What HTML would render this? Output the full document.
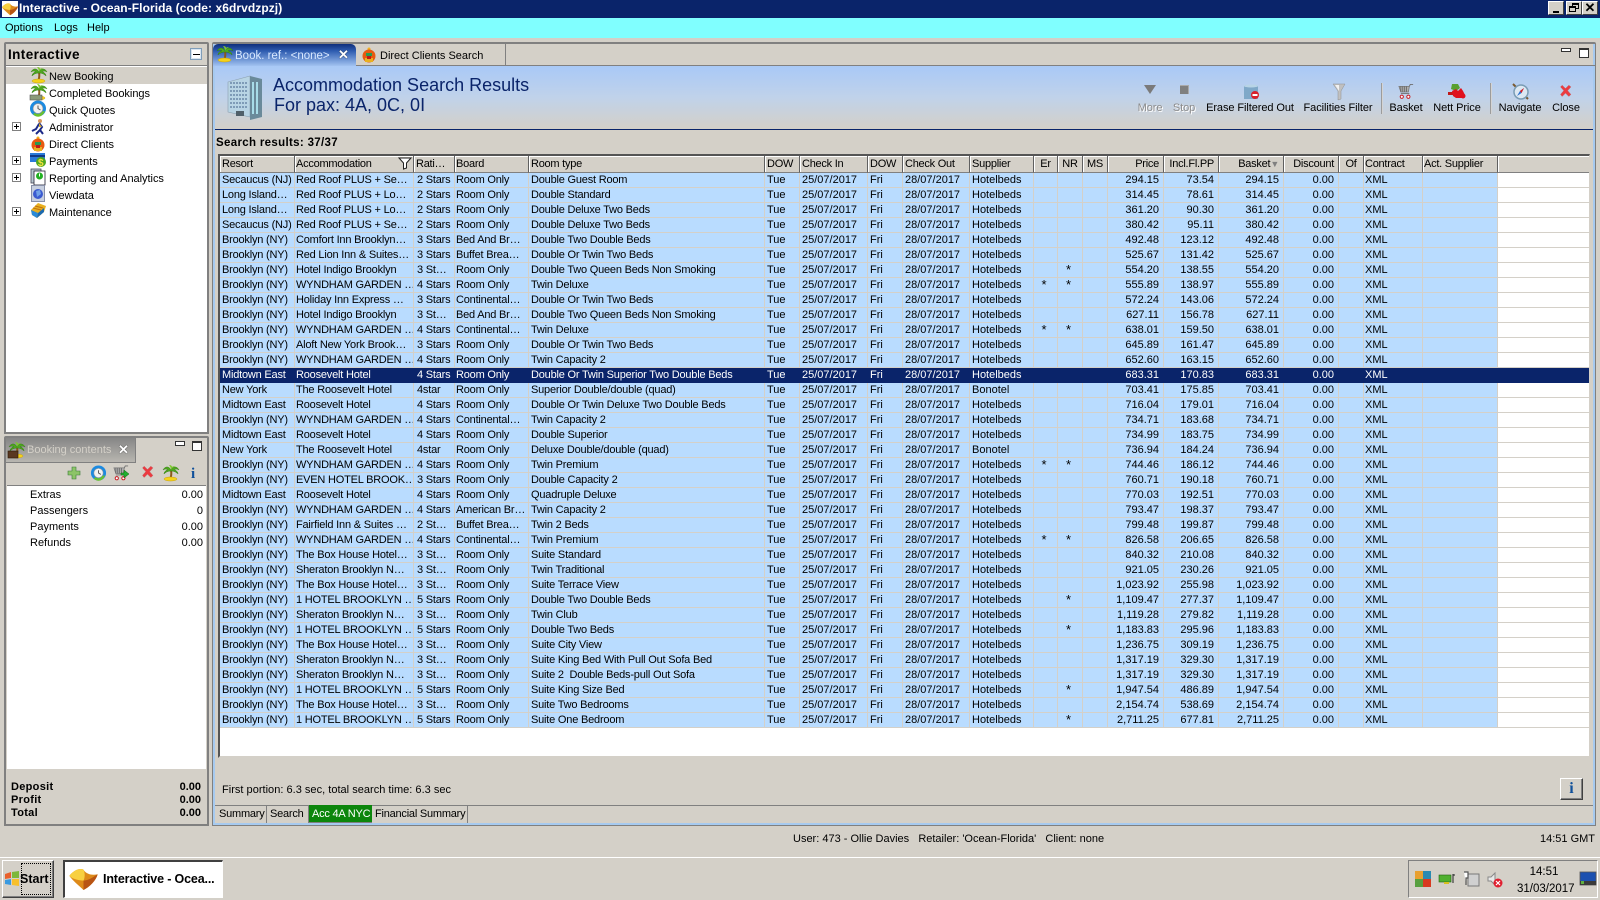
<!DOCTYPE html>
<html><head><meta charset="utf-8"><title>Interactive</title>
<style>
*{box-sizing:border-box}
html,body{margin:0;padding:0;width:1600px;height:900px;overflow:hidden;background:#d4d0c8;font:11px/14px "Liberation Sans",sans-serif;color:#000}
.a{position:absolute;white-space:nowrap}
svg{position:absolute;overflow:visible}
#title{left:0;top:0;width:1600px;height:18px;background:#0a246a;color:#fff;font:bold 12px/17px "Liberation Sans",sans-serif;padding-left:19px;letter-spacing:.07px}
#menu{left:0;top:18px;width:1600px;height:20px;background:#80ffff}
.wb{top:1px;width:16px;height:14px;background:#d4d0c8;border:1px solid;border-color:#fff #404040 #404040 #fff}
.panel{background:#d4d0c8;border:2px solid #808080;border-radius:2px 2px 0 0}
#grid{left:218px;top:154px;width:1372px;height:604px;background:#fff;border-top:2px solid #555;border-left:2px solid #555;border-right:1px solid #d4d0c8;border-bottom:2px solid #d4d0c8;overflow:hidden}
table{border-collapse:separate;border-spacing:0;table-layout:fixed;width:1370px;position:absolute;left:0;top:0}
td,th{padding:0 2px;height:15px;line-height:14px;font-size:11px;font-weight:normal;white-space:nowrap;overflow:hidden;text-align:left;border-right:1px solid #d4d0c8;border-bottom:1px solid #d4d0c8;background:#b9dcff}
td:nth-child(-n+5){letter-spacing:-.2px}
th{height:17px;background:#d4d0c8;border-right:1px solid #606060;border-bottom:1px solid #808080;box-shadow:inset 1px 1px 0 #fff;padding-left:2px;letter-spacing:-.25px}
td:nth-child(21){background:#fff;border-right:0}
th:nth-child(21){border-right:0}
td:nth-child(n+14):nth-child(-n+17),th:nth-child(n+14):nth-child(-n+17){text-align:right;padding-right:4px}
td:nth-child(11),td:nth-child(12),th:nth-child(11),th:nth-child(12),th:nth-child(13),th:nth-child(18){text-align:center}
td:nth-child(11),td:nth-child(12){font-size:13px;padding:0 3px 0 0;line-height:14px}
td:nth-child(2),td:nth-child(4),th:nth-child(2),th:nth-child(4),td:nth-child(19),th:nth-child(19),th:nth-child(20){padding-left:1px}
td:nth-child(3){padding-left:3px}
tr.s td{background:#0a246a;color:#fff;border-color:#0a246a}
.tree{left:49px;font-size:11px;letter-spacing:-.03px}
.plus{left:12px;width:9px;height:9px;border:1px solid #808080;background:#fff}
.plus:before{content:"";position:absolute;left:1px;top:3px;width:5px;height:1px;background:#000}
.plus:after{content:"";position:absolute;left:3px;top:1px;width:1px;height:5px;background:#000}
.tb{top:101px;text-align:center;transform:translateX(-50%);font-size:11px;letter-spacing:-.08px}
.dis{color:#8c8c8c;text-shadow:1px 1px 0 #fff}
.b{font-weight:bold}
.btab{top:805px;height:18px;line-height:19px;padding:0 3px;border-right:1px solid #808080;font-size:11px;letter-spacing:-.22px}
</style></head><body>
<svg width="0" height="0" style="position:absolute"><defs>
<symbol id="palm" viewBox="0 0 18 18"><path d="M9 6C9.500 9 9.300 12 8.500 14" stroke="#8a5a1c" stroke-width="2" fill="none"/><path d="M9 6C7 2 3 2 1 6 3 4.500 5 5 6 6 4 6 2 8 2 10 4 8 6 7 9 7 12 7 14 8 16 10 16 8 14 6 12 6 13 5 15 4.500 17 6 15 2 11 2 9 6Z" fill="#4ea81e" stroke="#2f7a10" stroke-width=".5"/><path d="M9 6C9 4 8 2 7 1 9 1 10 2 10 3 11 2 12 2 13 2 11 3 10 4 9 6Z" fill="#7ec82e"/><ellipse cx="8.500" cy="15" rx="6.500" ry="2" fill="#f4d21c" stroke="#c8a010" stroke-width=".5"/></symbol>
<symbol id="clock" viewBox="0 0 18 18"><circle cx="9" cy="8.500" r="8" fill="#1c8ae0"/><circle cx="9" cy="8.500" r="4.900" fill="#f2f2f2" stroke="#9a9a9a" stroke-width=".6"/><path d="M9 5.500V8.500L11.500 10" stroke="#555" stroke-width="1" fill="none"/><path d="M4 14C7 18 13 18 16 11L13 11.500C12 14 8 15 6 13Z" fill="#6cc22a"/></symbol>
<symbol id="cart" viewBox="0 0 18 18"><path d="M1 3H12L11 9H3Z" fill="#b0b0b0" stroke="#777" stroke-width=".8"/><path d="M3 3V9M5 3V9M7 3V9M9 3V9M12 3L13 1H16M3 10.500H12" stroke="#6f6f6f" stroke-width="1" fill="none"/><circle cx="4" cy="14" r="1.700" fill="#fff" stroke="#c8141c" stroke-width="1"/><circle cx="11" cy="14" r="1.700" fill="#fff" stroke="#c8141c" stroke-width="1"/></symbol>
<symbol id="x" viewBox="0 0 18 18"><path d="M3 3.500 5 1.500 9 5.500 13 1.500 15.500 3.500 11.500 8 15.500 12.500 13 15 9 11 5 15 3 12.500 7 8Z" fill="#ec3a40" stroke="#c0686c" stroke-width=".6"/></symbol>
<symbol id="logo" viewBox="0 0 18 14"><path d="M0 5C3 1 7 0 9 1 10 3 13 5 18 4 17 8 13 12 9 14 6 11 2 8 0 5Z" fill="#dd8a1a"/><path d="M0 5C3 1 7 0 9 1 10 3 10 6 9 8 6 8 2 7 0 5Z" fill="#f8d040"/><path d="M9 8C12 8 15 6 18 4 17 8 13 12 9 14Z" fill="#b85414"/></symbol>
</defs></svg>

<div class="a" id="title">Interactive - Ocean-Florida (code: x6drvdzpzj)</div>
<div class="a" style="left:2px;top:1px;width:16px;height:16px;background:#fff"></div>
<svg style="left:2px;top:2px" width="16" height="14"><use href="#logo" width="16" height="14"/></svg>
<div class="a wb" style="left:1548px"><div class="a" style="left:4px;top:9px;width:6px;height:2px;background:#000"></div></div>
<div class="a wb" style="left:1566px"><div class="a" style="left:5px;top:1px;width:7px;height:6px;border:1px solid #000;border-top-width:2px"></div><div class="a" style="left:2px;top:4px;width:7px;height:6px;border:1px solid #000;border-top-width:2px;background:#d4d0c8"></div></div>
<div class="a wb" style="left:1582px;font:bold 13px/12px 'Liberation Sans';text-align:center">✕</div>

<div class="a" id="menu"></div>
<div class="a" style="left:5px;top:21px;font-size:11px;line-height:15px">Options</div>
<div class="a" style="left:54px;top:21px;font-size:11px;line-height:15px">Logs</div>
<div class="a" style="left:87px;top:21px;font-size:11px;line-height:15px">Help</div>

<!-- Left tree panel -->
<div class="a panel" style="left:4px;top:42px;width:205px;height:392px;background:#fff"></div>
<div class="a" style="left:6px;top:44px;width:201px;height:22px;background:#d4d0c8;border-bottom:1px solid #808080"></div>
<div class="a b" style="left:8px;top:47px;font-size:13.500px;line-height:15px;letter-spacing:.4px">Interactive</div>
<div class="a" style="left:190px;top:48px;width:12px;height:12px;background:#fff;border:1px solid #7f9db9;box-shadow:inset 0 0 0 1px #d8e4f0"><div class="a" style="left:2px;top:5px;width:7px;height:1px;background:#000"></div></div>
<div class="a" style="left:6px;top:67px;width:201px;height:17px;background:#d4d0c8"></div>
<svg style="left:30px;top:66px" width="18" height="18"><use href="#palm" width="18" height="18"/></svg>
<div class="a tree" style="top:70px">New Booking</div>
<svg style="left:30px;top:83px" width="18" height="18"><use href="#palm" width="18" height="18"/><rect x="0" y="12" width="12" height="5" fill="#8a9a78" stroke="#555" stroke-width=".6"/></svg>
<div class="a tree" style="top:87px">Completed Bookings</div>
<svg style="left:29px;top:100px" width="18" height="18"><use href="#clock" width="18" height="18"/></svg>
<div class="a tree" style="top:104px">Quick Quotes</div>
<div class="a plus" style="top:122px"></div>
<svg style="left:31px;top:118px" width="16" height="17"><circle cx="9" cy="3" r="2" fill="#d89a60"/><path d="M8 5 11 9 9 12 12 16M8 6 5 11 1 13M9 12 5 16" stroke="#1c2a88" stroke-width="2" fill="none"/><path d="M8 5 11 9 8 9Z" fill="#d8b030"/></svg>
<div class="a tree" style="top:121px">Administrator</div>
<svg style="left:30px;top:135px" width="16" height="17"><circle cx="8" cy="3" r="1.500" fill="#f0b020"/><circle cx="8" cy="10" r="6.500" fill="#e85a10"/><rect x="5" y="7" width="6" height="3" fill="#2a9a50"/><path d="M4 12H12V16H4Z" fill="#e8b020"/><path d="M6 10H10V13H6Z" fill="#c01818"/></svg>
<div class="a tree" style="top:138px">Direct Clients</div>
<div class="a plus" style="top:156px"></div>
<svg style="left:30px;top:152px" width="17" height="17"><rect x="0" y="1" width="15" height="9" fill="#2a7ad8"/><rect x="0" y="3" width="15" height="2" fill="#103a88"/><circle cx="11" cy="10" r="5" fill="#4ea81e"/><text x="8" y="14" font-family="Liberation Sans" font-size="10" font-weight="bold" fill="#f4e040">$</text></svg>
<div class="a tree" style="top:155px">Payments</div>
<div class="a plus" style="top:173px"></div>
<svg style="left:31px;top:168px" width="15" height="18"><rect x="0" y="1" width="10" height="14" fill="#b8c8d0" stroke="#445" stroke-width=".8"/><rect x="3" y="3" width="11" height="14" fill="#fff" stroke="#223" stroke-width=".8"/><circle cx="8.500" cy="8" r="3.500" fill="#22b022"/><rect x="8" y="5.500" width="1" height="3" fill="#fff"/></svg>
<div class="a tree" style="top:172px">Reporting and Analytics</div>
<svg style="left:31px;top:185px" width="15" height="18"><rect x=".5" y=".5" width="13" height="16" fill="#c8d0e0" stroke="#8890a8"/><circle cx="7" cy="9" r="5" fill="#3a5ad0"/><path d="M5 6 9 5 10 9 6 12Z" fill="#70a0e8"/></svg>
<div class="a tree" style="top:189px">Viewdata</div>
<div class="a plus" style="top:207px"></div>
<svg style="left:30px;top:202px" width="17" height="17"><path d="M1 8 8 1 16 4 14 10 7 16 2 13Z" fill="#e8b020"/><path d="M1 8 8 11 7 16 2 13Z" fill="#2a8ad8"/><path d="M8 11 14 6 14 10 7 16Z" fill="#1c6ab0"/><path d="M5 4 13 6 M3 6 11 8" stroke="#c07010"/></svg>
<div class="a tree" style="top:206px">Maintenance</div>

<!-- Booking contents panel -->
<div class="a panel" style="left:4px;top:436px;width:205px;height:390px"></div>
<div class="a" style="left:6px;top:438px;width:130px;height:24px;background:linear-gradient(#868686,#b8b6b0);border-right:1px solid #808080"></div>
<svg style="left:8px;top:441px" width="18" height="18"><use href="#palm" width="18" height="18"/><rect x="0" y="10" width="10" height="7" fill="#5a3820" stroke="#2c1a08" stroke-width=".6"/></svg>
<div class="a" style="left:27px;top:443px;color:#d4d0c8;font-size:11px;line-height:15px">Booking contents</div>
<div class="a" style="left:118px;top:443px;color:#fff;font:bold 13px/14px 'Liberation Sans';text-shadow:0 0 1px #000">✕</div>
<div class="a" style="left:6px;top:462px;width:130px;height:1px;background:#808080"></div>
<div class="a" style="left:175px;top:441px;width:10px;height:5px;border:1px solid #333;background:#fff"></div>
<div class="a" style="left:192px;top:441px;width:10px;height:10px;border:1px solid #333;border-top-width:2px;background:#fff"></div>
<div class="a" style="left:7px;top:463px;width:199px;height:23px;background:#d4d0c8;border-bottom:1px solid #808080"></div>
<svg style="left:68px;top:467px" width="13" height="13"><path d="M4 0H8V4H12V8H8V12H4V8H0V4H4Z" fill="#8cc468" stroke="#3a7a3a" stroke-width=".6"/></svg>
<svg style="left:90px;top:465px" width="17" height="17"><use href="#clock" width="17" height="17"/></svg>
<svg style="left:113px;top:465px" width="17" height="17"><use href="#cart" width="17" height="17"/><path d="M8 8H11V5L16 9 11 13V10H8Z" fill="#20b030" stroke="#106010" stroke-width=".5"/></svg>
<svg style="left:140px;top:465px" width="15" height="15"><use href="#x" width="15" height="15"/></svg>
<svg style="left:162px;top:464px" width="18" height="18"><use href="#palm" width="18" height="18"/></svg>
<div class="a" style="left:191px;top:466px;color:#10509a;font:bold 15px/17px 'Liberation Serif',serif">i</div>
<div class="a" style="left:7px;top:486px;width:199px;height:283px;background:#fff"></div>
<div class="a" style="left:30px;top:488px">Extras</div><div class="a" style="right:1397px;top:488px">0.00</div>
<div class="a" style="left:30px;top:504px">Passengers</div><div class="a" style="right:1397px;top:504px">0</div>
<div class="a" style="left:30px;top:520px">Payments</div><div class="a" style="right:1397px;top:520px">0.00</div>
<div class="a" style="left:30px;top:536px">Refunds</div><div class="a" style="right:1397px;top:536px">0.00</div>
<div class="a b" style="left:11px;top:781px;line-height:13px;letter-spacing:.3px">Deposit<br>Profit<br>Total</div>
<div class="a b" style="right:1399px;top:781px;line-height:13px;text-align:right">0.00<br>0.00<br>0.00</div>

<!-- Right main panel -->
<div class="a" style="left:212px;top:42px;width:1384px;height:784px;border:1px solid #808080;border-top-width:2px;border-radius:2px 2px 0 0"></div>
<div class="a" style="left:213px;top:44px;width:1382px;height:781px;border:2px solid #a6caf0;border-top:0"></div>
<div class="a" style="left:213px;top:65px;width:1382px;height:1px;background:#808080"></div>
<div class="a" style="left:213px;top:44px;width:143px;height:23px;background:linear-gradient(#0f2f7c,#2e5cb0 30%,#a9c9f5);border-radius:5px 5px 0 0"></div>
<svg style="left:216px;top:45px" width="18" height="18"><use href="#palm" width="18" height="18"/></svg>
<div class="a" style="left:235px;top:49px;color:#d8e8ff;font-size:11.500px">Book. ref.: &lt;none&gt;</div>
<div class="a" style="left:338px;top:48px;color:#fff;font:bold 13px/14px 'Liberation Sans';text-shadow:0 0 1px #000">✕</div>
<div class="a" style="left:505px;top:44px;width:1px;height:21px;background:#808080"></div>
<svg style="left:361px;top:46px" width="16" height="17"><circle cx="8" cy="3" r="1.500" fill="#f0b020"/><circle cx="8" cy="10" r="6.500" fill="#e85a10"/><rect x="5" y="7" width="6" height="3" fill="#2a9a50"/><path d="M4 12H12V16H4Z" fill="#e8b020"/><path d="M6 10H10V13H6Z" fill="#c01818"/></svg>
<div class="a" style="left:380px;top:49px;font-size:11px">Direct Clients Search</div>
<div class="a" style="left:1561px;top:48px;width:10px;height:4px;border:1px solid #333;background:#fff"></div>
<div class="a" style="left:1579px;top:48px;width:10px;height:10px;border:1px solid #333;border-top-width:2px;background:#fff"></div>

<div class="a" style="left:215px;top:66px;width:1378px;height:63px;background:linear-gradient(#a9c9f7,#c0d2ea 50%,#d4d0c8)"></div>
<div class="a" style="left:215px;top:129px;width:1378px;height:1px;background:#0a246a"></div>
<svg style="left:226px;top:74px" width="38" height="47"><path d="M2 8 24 2V43L2 38Z" fill="#b8d4e4" stroke="#8ca0b0" stroke-width=".6"/><path d="M24 2 36 5V43L24 46Z" fill="#6a8a9a"/><path d="M4 9H22M4 13H22M4 17H22M4 21H22M4 25H22M4 29H22M4 33H22" stroke="#6a88a8" stroke-width="1.500" stroke-dasharray="2 1"/><path d="M27 8V40M31 8V40" stroke="#a8dce8" stroke-width="2"/><rect x="10" y="37" width="8" height="5" fill="#50606a"/></svg>
<div class="a" style="left:273px;top:75px;font-size:18px;line-height:20px;color:#0a246a">Accommodation Search Results</div>
<div class="a" style="left:274px;top:95px;font-size:18px;line-height:20px;color:#0a246a">For pax: 4A, 0C, 0I</div>

<svg style="left:1144px;top:84px" width="13" height="11"><path d="M0 1H12L6 10Z" fill="#7a7a7a"/></svg>
<div class="a tb dis" style="left:1150px">More</div>
<div class="a" style="left:1180px;top:85px;width:9px;height:9px;background:#808080;border-top:1px solid #aaa;border-right:1px solid #aaa"></div>
<div class="a tb dis" style="left:1184px">Stop</div>
<svg style="left:1244px;top:84px" width="17" height="17"><path d="M0 2 2 1H12L14 2V15H0Z" fill="#7fa8c8"/><ellipse cx="7" cy="2" rx="7" ry="1.500" fill="#b8d4e6"/><circle cx="11" cy="11" r="4" fill="#d8202c"/><rect x="8.500" y="10" width="5" height="2" fill="#fff"/></svg>
<div class="a tb" style="left:1250px">Erase Filtered Out</div>
<svg style="left:1333px;top:84px" width="13" height="17"><path d="M0 0H12L8 7V15L5 16V7Z" fill="#c0c0c0" stroke="#909090" stroke-width=".5"/><path d="M2 1H6L6 7Z" fill="#f2f2f2"/></svg>
<div class="a tb" style="left:1338px">Facilities Filter</div>
<div class="a" style="left:1381px;top:83px;width:2px;height:31px;background:linear-gradient(90deg,#808080,#f0f0f0)"></div>
<svg style="left:1398px;top:83px" width="17" height="18"><use href="#cart" width="17" height="18"/></svg>
<div class="a tb" style="left:1406px">Basket</div>
<svg style="left:1448px;top:83px" width="18" height="17"><path d="M4 1H10L12 5 8 8 3 6Z" fill="#58a030"/><path d="M0 9H5V12H0Z" fill="#c01818"/><path d="M4 8 8 6 10 8 13 5 15 8 17 12 14 15 8 15 5 13Z" fill="#e0101c"/><circle cx="15" cy="13" r="2.500" fill="#e0101c"/></svg>
<div class="a tb" style="left:1457px">Nett Price</div>
<div class="a" style="left:1490px;top:83px;width:2px;height:31px;background:linear-gradient(90deg,#808080,#f0f0f0)"></div>
<svg style="left:1512px;top:83px" width="17" height="17"><path d="M1 1 16 16" stroke="#7a5a30" stroke-width="2"/><circle cx="9" cy="9" r="7" fill="#dde8f2" stroke="#7a9cb4" stroke-width="1.500"/><path d="M12 5 9.500 10 5 13 8 8Z" fill="#2a70d0"/><path d="M12 5 8 8 9.500 10Z" fill="#e02020"/></svg>
<div class="a tb" style="left:1520px">Navigate</div>
<svg style="left:1558px;top:84px" width="15" height="15"><use href="#x" width="15" height="15"/></svg>
<div class="a tb" style="left:1566px">Close</div>

<div class="a b" style="left:216px;top:136px;font-size:11.500px;letter-spacing:.33px">Search results: 37/37</div>

<div class="a" id="grid">
<table><colgroup><col style="width:75px"><col style="width:119px"><col style="width:41px"><col style="width:74px"><col style="width:236px"><col style="width:35px"><col style="width:68px"><col style="width:35px"><col style="width:67px"><col style="width:64px"><col style="width:24px"><col style="width:25px"><col style="width:25px"><col style="width:56px"><col style="width:55px"><col style="width:65px"><col style="width:55px"><col style="width:25px"><col style="width:59px"><col style="width:75px"><col style="width:92px"></colgroup>
<tr><th>Resort<th>Accommodation<th>Rati…<th>Board<th>Room type<th>DOW<th>Check In<th>DOW<th>Check Out<th>Supplier<th>Er<th>NR<th>MS<th>Price<th>Incl.Fl.PP<th>Basket<span style="color:#808080;font-size:9px">▼</span><th>Discount<th>Of<th>Contract<th>Act. Supplier<th></tr>
<tr><td>Secaucus (NJ)<td>Red Roof PLUS + Se…<td>2 Stars<td>Room Only<td>Double Guest Room<td>Tue<td>25/07/2017<td>Fri<td>28/07/2017<td>Hotelbeds<td><td><td><td>294.15<td>73.54<td>294.15<td>0.00<td><td>XML<td><td></tr>
<tr><td>Long Island…<td>Red Roof PLUS + Lo…<td>2 Stars<td>Room Only<td>Double Standard<td>Tue<td>25/07/2017<td>Fri<td>28/07/2017<td>Hotelbeds<td><td><td><td>314.45<td>78.61<td>314.45<td>0.00<td><td>XML<td><td></tr>
<tr><td>Long Island…<td>Red Roof PLUS + Lo…<td>2 Stars<td>Room Only<td>Double Deluxe Two Beds<td>Tue<td>25/07/2017<td>Fri<td>28/07/2017<td>Hotelbeds<td><td><td><td>361.20<td>90.30<td>361.20<td>0.00<td><td>XML<td><td></tr>
<tr><td>Secaucus (NJ)<td>Red Roof PLUS + Se…<td>2 Stars<td>Room Only<td>Double Deluxe Two Beds<td>Tue<td>25/07/2017<td>Fri<td>28/07/2017<td>Hotelbeds<td><td><td><td>380.42<td>95.11<td>380.42<td>0.00<td><td>XML<td><td></tr>
<tr><td>Brooklyn (NY)<td>Comfort Inn Brooklyn…<td>3 Stars<td>Bed And Br…<td>Double Two Double Beds<td>Tue<td>25/07/2017<td>Fri<td>28/07/2017<td>Hotelbeds<td><td><td><td>492.48<td>123.12<td>492.48<td>0.00<td><td>XML<td><td></tr>
<tr><td>Brooklyn (NY)<td>Red Lion Inn &amp; Suites…<td>3 Stars<td>Buffet Brea…<td>Double Or Twin Two Beds<td>Tue<td>25/07/2017<td>Fri<td>28/07/2017<td>Hotelbeds<td><td><td><td>525.67<td>131.42<td>525.67<td>0.00<td><td>XML<td><td></tr>
<tr><td>Brooklyn (NY)<td>Hotel Indigo Brooklyn<td>3 St…<td>Room Only<td>Double Two Queen Beds Non Smoking<td>Tue<td>25/07/2017<td>Fri<td>28/07/2017<td>Hotelbeds<td><td>*<td><td>554.20<td>138.55<td>554.20<td>0.00<td><td>XML<td><td></tr>
<tr><td>Brooklyn (NY)<td>WYNDHAM GARDEN …<td>4 Stars<td>Room Only<td>Twin Deluxe<td>Tue<td>25/07/2017<td>Fri<td>28/07/2017<td>Hotelbeds<td>*<td>*<td><td>555.89<td>138.97<td>555.89<td>0.00<td><td>XML<td><td></tr>
<tr><td>Brooklyn (NY)<td>Holiday Inn Express …<td>3 Stars<td>Continental…<td>Double Or Twin Two Beds<td>Tue<td>25/07/2017<td>Fri<td>28/07/2017<td>Hotelbeds<td><td><td><td>572.24<td>143.06<td>572.24<td>0.00<td><td>XML<td><td></tr>
<tr><td>Brooklyn (NY)<td>Hotel Indigo Brooklyn<td>3 St…<td>Bed And Br…<td>Double Two Queen Beds Non Smoking<td>Tue<td>25/07/2017<td>Fri<td>28/07/2017<td>Hotelbeds<td><td><td><td>627.11<td>156.78<td>627.11<td>0.00<td><td>XML<td><td></tr>
<tr><td>Brooklyn (NY)<td>WYNDHAM GARDEN …<td>4 Stars<td>Continental…<td>Twin Deluxe<td>Tue<td>25/07/2017<td>Fri<td>28/07/2017<td>Hotelbeds<td>*<td>*<td><td>638.01<td>159.50<td>638.01<td>0.00<td><td>XML<td><td></tr>
<tr><td>Brooklyn (NY)<td>Aloft New York Brook…<td>3 Stars<td>Room Only<td>Double Or Twin Two Beds<td>Tue<td>25/07/2017<td>Fri<td>28/07/2017<td>Hotelbeds<td><td><td><td>645.89<td>161.47<td>645.89<td>0.00<td><td>XML<td><td></tr>
<tr><td>Brooklyn (NY)<td>WYNDHAM GARDEN …<td>4 Stars<td>Room Only<td>Twin Capacity 2<td>Tue<td>25/07/2017<td>Fri<td>28/07/2017<td>Hotelbeds<td><td><td><td>652.60<td>163.15<td>652.60<td>0.00<td><td>XML<td><td></tr>
<tr class="s"><td>Midtown East<td>Roosevelt Hotel<td>4 Stars<td>Room Only<td>Double Or Twin Superior Two Double Beds<td>Tue<td>25/07/2017<td>Fri<td>28/07/2017<td>Hotelbeds<td><td><td><td>683.31<td>170.83<td>683.31<td>0.00<td><td>XML<td><td></tr>
<tr><td>New York<td>The Roosevelt Hotel<td>4star<td>Room Only<td>Superior Double/double (quad)<td>Tue<td>25/07/2017<td>Fri<td>28/07/2017<td>Bonotel<td><td><td><td>703.41<td>175.85<td>703.41<td>0.00<td><td>XML<td><td></tr>
<tr><td>Midtown East<td>Roosevelt Hotel<td>4 Stars<td>Room Only<td>Double Or Twin Deluxe Two Double Beds<td>Tue<td>25/07/2017<td>Fri<td>28/07/2017<td>Hotelbeds<td><td><td><td>716.04<td>179.01<td>716.04<td>0.00<td><td>XML<td><td></tr>
<tr><td>Brooklyn (NY)<td>WYNDHAM GARDEN …<td>4 Stars<td>Continental…<td>Twin Capacity 2<td>Tue<td>25/07/2017<td>Fri<td>28/07/2017<td>Hotelbeds<td><td><td><td>734.71<td>183.68<td>734.71<td>0.00<td><td>XML<td><td></tr>
<tr><td>Midtown East<td>Roosevelt Hotel<td>4 Stars<td>Room Only<td>Double Superior<td>Tue<td>25/07/2017<td>Fri<td>28/07/2017<td>Hotelbeds<td><td><td><td>734.99<td>183.75<td>734.99<td>0.00<td><td>XML<td><td></tr>
<tr><td>New York<td>The Roosevelt Hotel<td>4star<td>Room Only<td>Deluxe Double/double (quad)<td>Tue<td>25/07/2017<td>Fri<td>28/07/2017<td>Bonotel<td><td><td><td>736.94<td>184.24<td>736.94<td>0.00<td><td>XML<td><td></tr>
<tr><td>Brooklyn (NY)<td>WYNDHAM GARDEN …<td>4 Stars<td>Room Only<td>Twin Premium<td>Tue<td>25/07/2017<td>Fri<td>28/07/2017<td>Hotelbeds<td>*<td>*<td><td>744.46<td>186.12<td>744.46<td>0.00<td><td>XML<td><td></tr>
<tr><td>Brooklyn (NY)<td>EVEN HOTEL BROOK…<td>3 Stars<td>Room Only<td>Double Capacity 2<td>Tue<td>25/07/2017<td>Fri<td>28/07/2017<td>Hotelbeds<td><td><td><td>760.71<td>190.18<td>760.71<td>0.00<td><td>XML<td><td></tr>
<tr><td>Midtown East<td>Roosevelt Hotel<td>4 Stars<td>Room Only<td>Quadruple Deluxe<td>Tue<td>25/07/2017<td>Fri<td>28/07/2017<td>Hotelbeds<td><td><td><td>770.03<td>192.51<td>770.03<td>0.00<td><td>XML<td><td></tr>
<tr><td>Brooklyn (NY)<td>WYNDHAM GARDEN …<td>4 Stars<td>American Br…<td>Twin Capacity 2<td>Tue<td>25/07/2017<td>Fri<td>28/07/2017<td>Hotelbeds<td><td><td><td>793.47<td>198.37<td>793.47<td>0.00<td><td>XML<td><td></tr>
<tr><td>Brooklyn (NY)<td>Fairfield Inn &amp; Suites …<td>2 St…<td>Buffet Brea…<td>Twin 2 Beds<td>Tue<td>25/07/2017<td>Fri<td>28/07/2017<td>Hotelbeds<td><td><td><td>799.48<td>199.87<td>799.48<td>0.00<td><td>XML<td><td></tr>
<tr><td>Brooklyn (NY)<td>WYNDHAM GARDEN …<td>4 Stars<td>Continental…<td>Twin Premium<td>Tue<td>25/07/2017<td>Fri<td>28/07/2017<td>Hotelbeds<td>*<td>*<td><td>826.58<td>206.65<td>826.58<td>0.00<td><td>XML<td><td></tr>
<tr><td>Brooklyn (NY)<td>The Box House Hotel…<td>3 St…<td>Room Only<td>Suite Standard<td>Tue<td>25/07/2017<td>Fri<td>28/07/2017<td>Hotelbeds<td><td><td><td>840.32<td>210.08<td>840.32<td>0.00<td><td>XML<td><td></tr>
<tr><td>Brooklyn (NY)<td>Sheraton Brooklyn N…<td>3 St…<td>Room Only<td>Twin Traditional<td>Tue<td>25/07/2017<td>Fri<td>28/07/2017<td>Hotelbeds<td><td><td><td>921.05<td>230.26<td>921.05<td>0.00<td><td>XML<td><td></tr>
<tr><td>Brooklyn (NY)<td>The Box House Hotel…<td>3 St…<td>Room Only<td>Suite Terrace View<td>Tue<td>25/07/2017<td>Fri<td>28/07/2017<td>Hotelbeds<td><td><td><td>1,023.92<td>255.98<td>1,023.92<td>0.00<td><td>XML<td><td></tr>
<tr><td>Brooklyn (NY)<td>1 HOTEL BROOKLYN …<td>5 Stars<td>Room Only<td>Double Two Double Beds<td>Tue<td>25/07/2017<td>Fri<td>28/07/2017<td>Hotelbeds<td><td>*<td><td>1,109.47<td>277.37<td>1,109.47<td>0.00<td><td>XML<td><td></tr>
<tr><td>Brooklyn (NY)<td>Sheraton Brooklyn N…<td>3 St…<td>Room Only<td>Twin Club<td>Tue<td>25/07/2017<td>Fri<td>28/07/2017<td>Hotelbeds<td><td><td><td>1,119.28<td>279.82<td>1,119.28<td>0.00<td><td>XML<td><td></tr>
<tr><td>Brooklyn (NY)<td>1 HOTEL BROOKLYN …<td>5 Stars<td>Room Only<td>Double Two Beds<td>Tue<td>25/07/2017<td>Fri<td>28/07/2017<td>Hotelbeds<td><td>*<td><td>1,183.83<td>295.96<td>1,183.83<td>0.00<td><td>XML<td><td></tr>
<tr><td>Brooklyn (NY)<td>The Box House Hotel…<td>3 St…<td>Room Only<td>Suite City View<td>Tue<td>25/07/2017<td>Fri<td>28/07/2017<td>Hotelbeds<td><td><td><td>1,236.75<td>309.19<td>1,236.75<td>0.00<td><td>XML<td><td></tr>
<tr><td>Brooklyn (NY)<td>Sheraton Brooklyn N…<td>3 St…<td>Room Only<td>Suite King Bed With Pull Out Sofa Bed<td>Tue<td>25/07/2017<td>Fri<td>28/07/2017<td>Hotelbeds<td><td><td><td>1,317.19<td>329.30<td>1,317.19<td>0.00<td><td>XML<td><td></tr>
<tr><td>Brooklyn (NY)<td>Sheraton Brooklyn N…<td>3 St…<td>Room Only<td>Suite 2&nbsp; Double Beds-pull Out Sofa<td>Tue<td>25/07/2017<td>Fri<td>28/07/2017<td>Hotelbeds<td><td><td><td>1,317.19<td>329.30<td>1,317.19<td>0.00<td><td>XML<td><td></tr>
<tr><td>Brooklyn (NY)<td>1 HOTEL BROOKLYN …<td>5 Stars<td>Room Only<td>Suite King Size Bed<td>Tue<td>25/07/2017<td>Fri<td>28/07/2017<td>Hotelbeds<td><td>*<td><td>1,947.54<td>486.89<td>1,947.54<td>0.00<td><td>XML<td><td></tr>
<tr><td>Brooklyn (NY)<td>The Box House Hotel…<td>3 St…<td>Room Only<td>Suite Two Bedrooms<td>Tue<td>25/07/2017<td>Fri<td>28/07/2017<td>Hotelbeds<td><td><td><td>2,154.74<td>538.69<td>2,154.74<td>0.00<td><td>XML<td><td></tr>
<tr><td>Brooklyn (NY)<td>1 HOTEL BROOKLYN …<td>5 Stars<td>Room Only<td>Suite One Bedroom<td>Tue<td>25/07/2017<td>Fri<td>28/07/2017<td>Hotelbeds<td><td>*<td><td>2,711.25<td>677.81<td>2,711.25<td>0.00<td><td>XML<td><td></tr>
</table>
<svg style="left:178px;top:1px" width="14" height="13"><path d="M1 1H13L8.500 6V11L5.500 12V6Z" fill="#fff" stroke="#222" stroke-width="1"/></svg>
</div>

<div class="a" style="left:222px;top:783px;letter-spacing:.02px">First portion: 6.3 sec, total search time: 6.3 sec</div>
<div class="a" style="left:1560px;top:778px;width:23px;height:22px;background:#d4d0c8;border:1px solid;border-color:#fff #404040 #404040 #fff;box-shadow:inset -1px -1px 0 #808080;color:#10509a;font:bold 16px/20px 'Liberation Serif',serif;text-align:center">i</div>
<div class="a" style="left:215px;top:805px;width:1378px;height:1px;background:#808080"></div>
<div class="a btab" style="left:216px;width:51px">Summary</div>
<div class="a btab" style="left:267px;width:42px">Search</div>
<div class="a btab" style="left:309px;width:63px;background:#0c860c;color:#fff;border-right:0;border-bottom:1px solid #808080">Acc 4A NYC</div>
<div class="a btab" style="left:372px;width:96px">Financial Summary</div>

<div class="a" style="left:793px;top:832px">User: 473 - Ollie Davies&nbsp;&nbsp;&nbsp;Retailer: 'Ocean-Florida'&nbsp;&nbsp;&nbsp;Client: none</div>
<div class="a" style="left:1540px;top:832px">14:51 GMT</div>

<!-- Taskbar -->
<div class="a" style="left:0;top:857px;width:1600px;height:1px;background:#fff"></div>
<div class="a" style="left:2px;top:860px;width:52px;height:38px;border:1px solid;border-color:#fff #404040 #404040 #fff;box-shadow:inset -1px -1px 0 #808080"></div>
<div class="a" style="left:21px;top:863px;width:30px;height:32px;border:1px dotted #000"></div>
<svg style="left:4px;top:871px" width="16" height="15"><path d="M1 3 7 1V7L1 8Z" fill="#e8602c"/><path d="M8 1 15 0V7L8 7Z" fill="#7cb83c"/><path d="M1 9 7 8V14L1 13Z" fill="#3a9ae0"/><path d="M8 8 15 8V15L8 14Z" fill="#f8c02c"/></svg>
<div class="a b" style="left:20px;top:872px;font-size:12.500px">Start</div>
<div class="a" style="left:63px;top:860px;width:160px;height:38px;background:#fff;border:1px solid;border-color:#404040 #fff #fff #404040;border-top-width:2px;border-left-width:2px"></div>
<svg style="left:69px;top:868px" width="29" height="22"><use href="#logo" width="29" height="22"/></svg>
<div class="a b" style="left:103px;top:872px;font-size:12.500px;letter-spacing:-.15px">Interactive - Ocea...</div>
<div class="a" style="left:1408px;top:860px;width:190px;height:38px;border:1px solid;border-color:#808080 #fff #fff #808080"></div>
<svg style="left:1415px;top:871px" width="16" height="16"><path d="M0 0H8V8H0Z" fill="#e8a030"/><path d="M8 0H16V8H8Z" fill="#2a8ab0"/><path d="M0 8H8V16H0Z" fill="#58a040"/><path d="M8 8H16V16H8Z" fill="#d83a20"/></svg>
<svg style="left:1439px;top:874px" width="16" height="10"><rect x="0" y="1" width="12" height="7" fill="#50b030" stroke="#206010" stroke-width=".6"/><path d="M14 0V9M14 1H16" stroke="#222"/><path d="M5 8H10V10H5Z" fill="#d8c020"/></svg>
<svg style="left:1463px;top:871px" width="16" height="16"><rect x="5" y="3" width="11" height="12" fill="#d0d0d0" stroke="#777" stroke-width="1"/><path d="M1 1H5V7H3V14" stroke="#555" fill="#fff" stroke-width="1.200"/></svg>
<svg style="left:1487px;top:872px" width="16" height="16"><path d="M1 5H4L8 1V13L4 9H1Z" fill="#e8e8e8" stroke="#888"/><circle cx="11" cy="11" r="4.500" fill="#e02030"/><path d="M9 9 13 13M13 9 9 13" stroke="#fff" stroke-width="1.200"/></svg>
<div class="a" style="left:1517px;top:864px;width:54px;text-align:center;line-height:17px;font-size:11.500px">14:51<br>31/03/2017</div>
<svg style="left:1580px;top:872px" width="16" height="14"><rect width="16" height="13" fill="#1c50b0" stroke="#555" stroke-width=".8"/><rect y="9" width="16" height="4" fill="#3a3a3a"/><rect x="1" y="9" width="3" height="3" fill="#60b040"/></svg>
</body></html>
